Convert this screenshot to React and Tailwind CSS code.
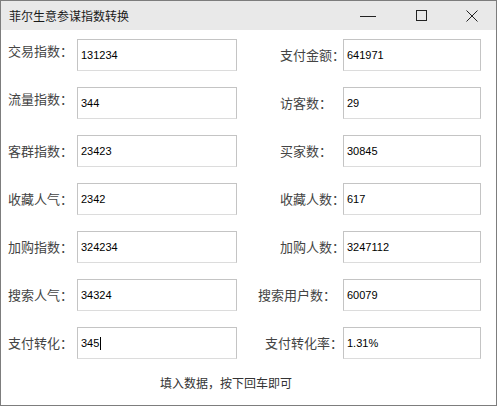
import React from 'react';

const rows = [
  { l: '交易指数：', lv: '131234', r: '支付金额：', rv: '641971', rp: 'pl-[43px]', up: true },
  { l: '流量指数：', lv: '344', r: '访客数：', rv: '29', rp: 'pl-[43px]', up: true },
  { l: '客群指数：', lv: '23423', r: '买家数：', rv: '30845', rp: 'pl-[43px]' },
  { l: '收藏人气：', lv: '2342', r: '收藏人数：', rv: '617', rp: 'pl-[43px]' },
  { l: '加购指数：', lv: '324234', r: '加购人数：', rv: '3247112', rp: 'pl-[43px]' },
  { l: '搜索人气：', lv: '34324', r: '搜索用户数：', rv: '60079', rp: 'pl-[21px]' },
  { l: '支付转化：', lv: '345', r: '支付转化率：', rv: '1.31%', rp: 'pl-[28px]', caret: true },
];

function Field({ value, width, caret }) {
  return (
    <div
      className={`${width} h-[32px] shrink-0 flex items-center pl-[3px] bg-white border border-[#c4c4c4] border-b-[#dcdcdc] text-[11px] text-black`}
      style={{ fontFamily: '"Liberation Sans", Arial, sans-serif' }}
    >
      <span>{value}</span>
      {caret && <span className="ml-[1px] w-px h-[13px] bg-black" />}
    </div>
  );
}

export default function App() {
  return (
    <div
      className="w-[497px] h-[406px] border border-[#7d7d7d] flex flex-col bg-white"
      style={{ fontFamily: '"Noto Sans CJK SC", "Liberation Sans", sans-serif' }}
    >
      {/* title bar */}
      <div className="h-[29px] shrink-0 bg-[#e9e9e9] flex items-center">
        <span className="pl-[8px] text-[12px] text-[#1a1a1a]">菲尔生意参谋指数转换</span>
        <div className="ml-auto flex items-center pr-[18px]">
          <svg width="16" height="10" viewBox="0 0 16 10">
            <line x1="0" y1="5.5" x2="16" y2="5.5" stroke="#222" strokeWidth="1" />
          </svg>
          <svg width="11" height="11" viewBox="0 0 11 11" className="ml-[40px]">
            <rect x="0.5" y="0.5" width="10" height="10" fill="none" stroke="#222" strokeWidth="1" />
          </svg>
          <svg width="12" height="12" viewBox="0 0 12 12" className="ml-[39px]">
            <path d="M0.5 0.5 L11.5 11.5 M11.5 0.5 L0.5 11.5" stroke="#222" strokeWidth="1" />
          </svg>
        </div>
      </div>

      {/* form */}
      <div className="flex-1 flex flex-col pt-[9px] gap-[16px]">
        {rows.map((row) => (
          <div key={row.l} className="flex items-center h-[32px] text-[13px] text-[#444]">
            <div className={`w-[76px] shrink-0 pl-[7px] whitespace-nowrap ${row.up ? 'mb-[8px]' : ''}`}>
              {row.l}
            </div>
            <Field value={row.lv} width="w-[160px]" caret={row.caret} />
            <div className={`w-[106px] shrink-0 whitespace-nowrap ${row.rp}`}>{row.r}</div>
            <Field value={row.rv} width="w-[138px]" />
          </div>
        ))}
        <div className="pl-[159px] text-[12px] text-[#333] leading-[16px]">填入数据，按下回车即可</div>
      </div>
    </div>
  );
}
